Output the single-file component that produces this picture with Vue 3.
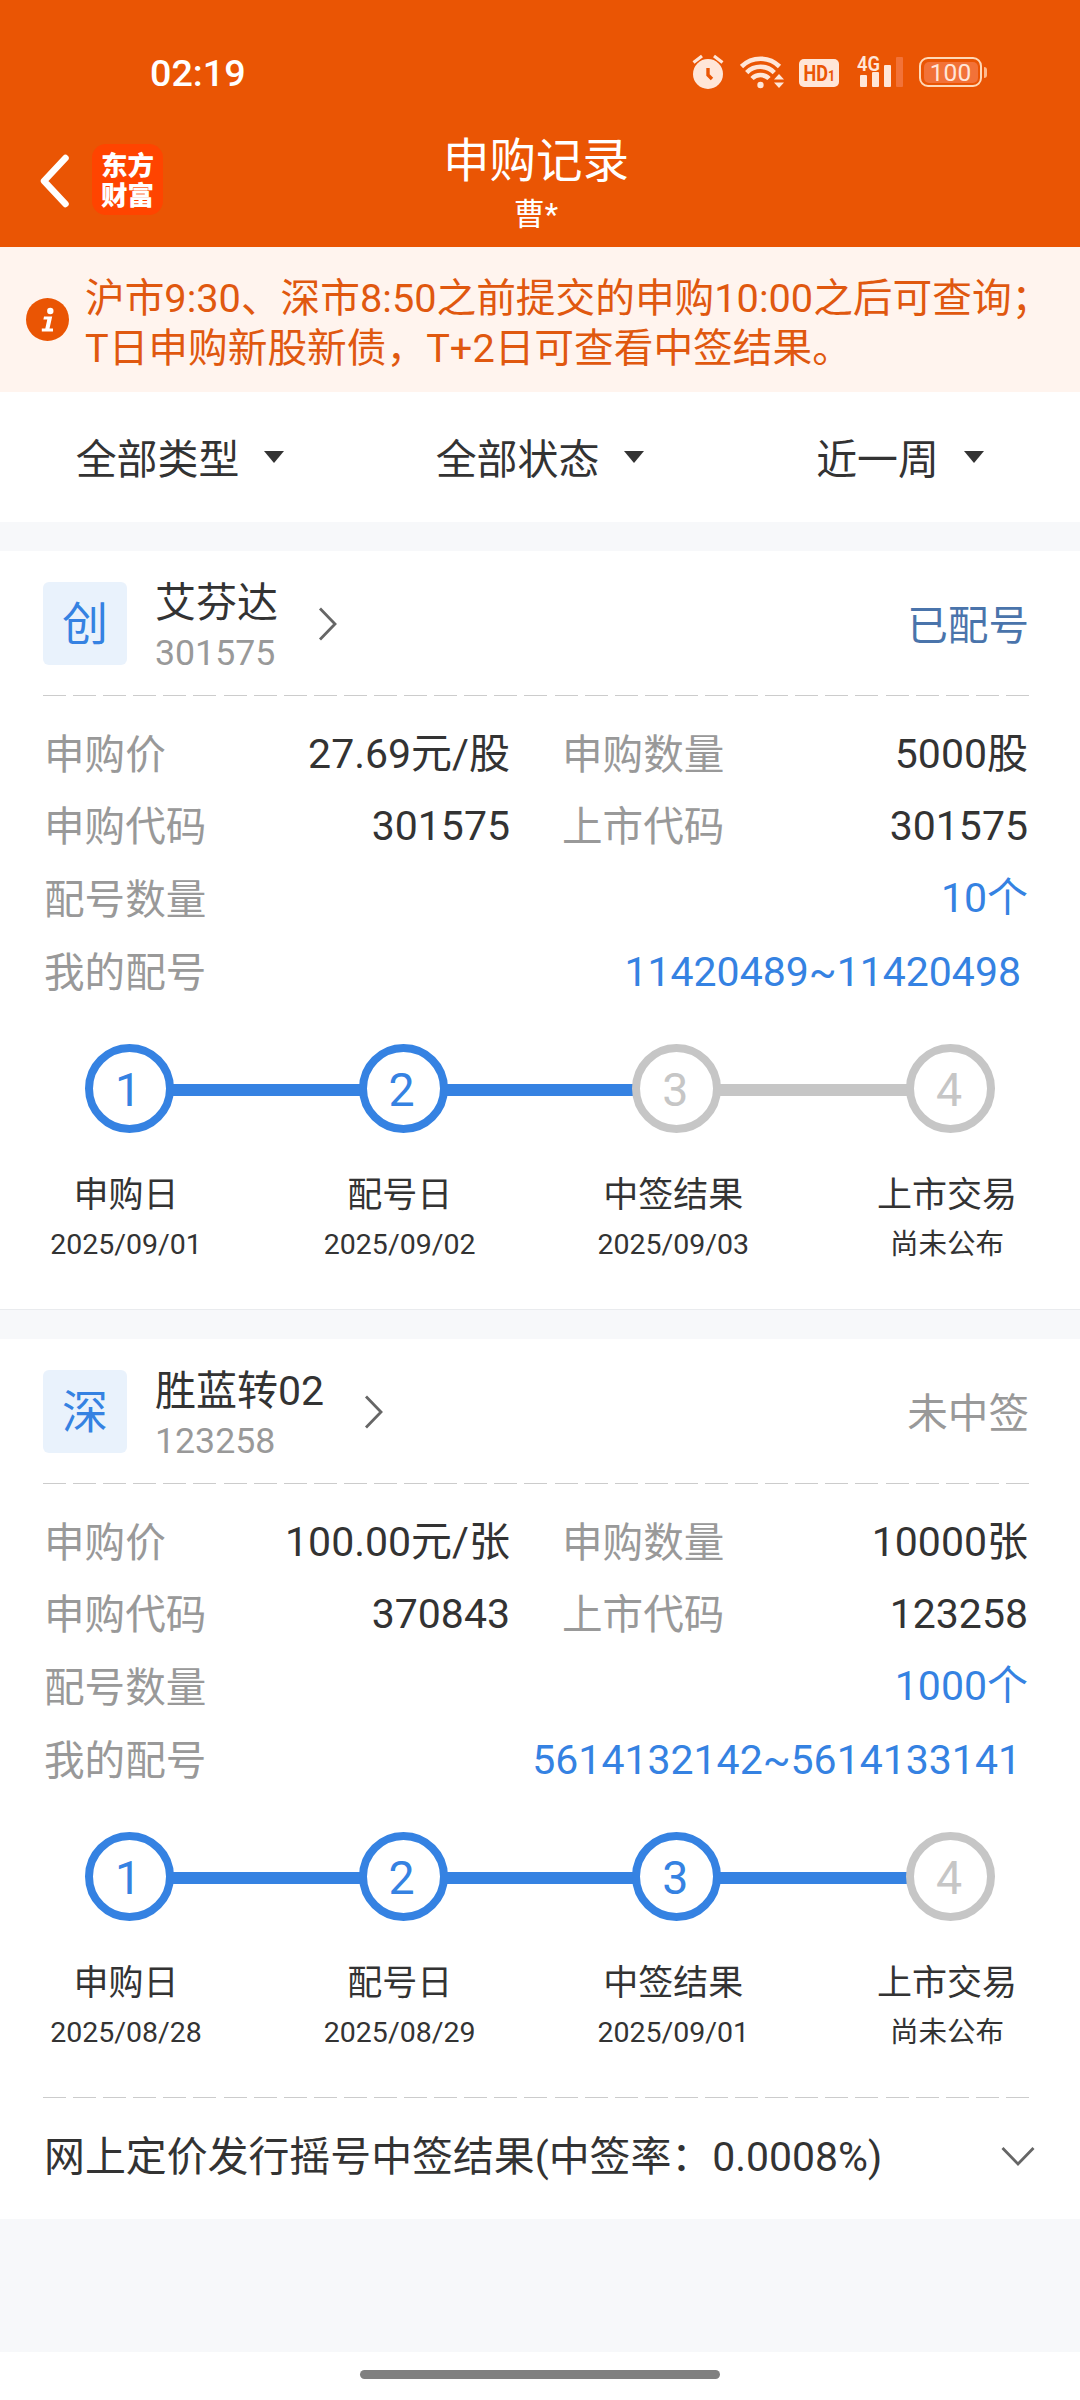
<script setup>
const filters = ['全部类型', '全部状态', '近一周']

const records = [
  {
    badge: '创', name: '艾芬达', code: '301575', status: '已配号', tone: 'allotted',
    price: '27.69元/股', amount: '5000股', applyCode: '301575', listCode: '301575',
    count: '10个', numbers: '11420489~11420498',
    steps: [
      { label: '申购日', date: '2025/09/01', done: true },
      { label: '配号日', date: '2025/09/02', done: true },
      { label: '中签结果', date: '2025/09/03', done: false },
      { label: '上市交易', date: '尚未公布', done: false }
    ],
    lines: [true, true, false]
  },
  {
    badge: '深', name: '胜蓝转02', code: '123258', status: '未中签', tone: 'missed',
    price: '100.00元/张', amount: '10000张', applyCode: '370843', listCode: '123258',
    count: '1000个', numbers: '5614132142~5614133141',
    steps: [
      { label: '申购日', date: '2025/08/28', done: true },
      { label: '配号日', date: '2025/08/29', done: true },
      { label: '中签结果', date: '2025/09/01', done: true },
      { label: '上市交易', date: '尚未公布', done: false }
    ],
    lines: [true, true, true],
    result: '网上定价发行摇号中签结果(中签率：0.0008%)'
  }
]
</script>

<template>
  <div class="page">
    <header class="header">
      <div class="statusbar">
        <span class="time">02:19</span>
        <div class="sys">
          <svg class="alarm" width="32" height="36" viewBox="0 0 32 36">
            <circle cx="16" cy="20" r="15" fill="#ffe6d8" />
            <path d="M1.5 8.5 10 2M30.5 8.5 22 2" stroke="#ffe6d8" stroke-width="3.2" fill="none" />
            <path d="M16 14v7l4 4" stroke="#ea5504" stroke-width="3.4" fill="none" />
          </svg>
          <svg class="wifi" width="46" height="36" viewBox="0 0 46 36">
            <g fill="none" stroke="#ffe6d8" stroke-width="4.6">
              <path d="M1.5 12.500a27 27 0 0 1 38 0" />
              <path d="M6.700 18.500a19.500 19.500 0 0 1 27.600 0" />
              <path d="M12 24.500a12 12 0 0 1 17 0" />
            </g>
            <circle cx="20.500" cy="31" r="3.200" fill="#ffe6d8" />
            <path d="M34 25.500h10l-5-5.500zM34 28.500h10l-5 5.500z" fill="#ffe6d8" />
          </svg>
          <svg class="hd" width="40" height="28" viewBox="0 0 40 28">
            <rect width="40" height="28" rx="5" fill="#ffe6d8" />
            <text x="4.500" y="22" font-size="22" font-weight="700" fill="#ea5504" textLength="31.500" lengthAdjust="spacingAndGlyphs">HD<tspan font-size="15">1</tspan></text>
          </svg>
          <svg class="signal" width="48" height="42" viewBox="0 -8 48 42">
            <text x="0" y="16" font-size="20.500" font-weight="600" fill="#ffe6d8" textLength="23" lengthAdjust="spacingAndGlyphs">4G</text>
            <g fill="#ffe6d8">
              <rect x="3" y="20" width="7" height="12" rx="1" />
              <rect x="15" y="17" width="7" height="15" rx="1" />
              <rect x="27" y="10" width="7" height="22" rx="1" />
            </g>
            <rect x="39" y="2" width="7" height="30" rx="1" fill="#f27238" />
          </svg>
          <div class="battery"><span>100</span></div>
          <i class="nub"></i>
        </div>
      </div>
      <div class="navbar">
        <div class="side">
          <svg width="32" height="56" viewBox="0 0 32 56">
            <path d="M26.500 5 5 28l21.500 23" fill="none" stroke="#fff" stroke-width="6.500" stroke-linecap="round" stroke-linejoin="round" />
          </svg>
          <div class="logo"><span>东方</span><span>财富</span></div>
        </div>
        <div class="titles">
          <h1>申购记录</h1>
          <p>曹*</p>
        </div>
        <div class="side"></div>
      </div>
    </header>

    <section class="notice">
      <svg width="43" height="43" viewBox="0 0 43 43">
        <circle cx="21.500" cy="21.500" r="21.500" fill="#ea5504" />
        <circle cx="24.300" cy="13" r="3.200" fill="#fff" />
        <path d="M18 18.500h8.200l-2.700 12h3.500v2.900H15.800v-2.900h3.500l2-9H17.400z" fill="#fff" />
      </svg>
      <div class="notice-text">
        <p>沪市9:30、深市8:50之前提交的申购10:00之后可查询；</p>
        <p>T日申购新股新债，T+2日可查看中签结果。</p>
      </div>
    </section>

    <nav class="filters">
      <div v-for="f in filters" :key="f" class="filter">
        <span>{{ f }}</span>
        <i class="caret"></i>
      </div>
    </nav>

    <main>
      <article v-for="r in records" :key="r.code" class="card">
        <div class="head">
          <div class="badge">{{ r.badge }}</div>
          <div class="who">
            <div class="name">{{ r.name }}</div>
            <div class="code">{{ r.code }}</div>
          </div>
          <svg class="go" width="20" height="36" viewBox="0 0 20 36">
            <path d="M2 2.500 17 18 2 33.500" fill="none" stroke="#666" stroke-width="2.800" />
          </svg>
          <div class="status" :class="r.tone">{{ r.status }}</div>
        </div>
        <div class="dash"></div>
        <div class="info">
          <div class="row">
            <div class="cell first"><span>申购价</span><b>{{ r.price }}</b></div>
            <div class="cell"><span>申购数量</span><b>{{ r.amount }}</b></div>
          </div>
          <div class="row">
            <div class="cell first"><span>申购代码</span><b>{{ r.applyCode }}</b></div>
            <div class="cell"><span>上市代码</span><b>{{ r.listCode }}</b></div>
          </div>
          <div class="row tall">
            <div class="cell"><span>配号数量</span><b class="blue">{{ r.count }}</b></div>
          </div>
          <div class="row">
            <div class="cell inset"><span>我的配号</span><b class="blue">{{ r.numbers }}</b></div>
          </div>
        </div>
        <div class="track">
          <template v-for="(s, i) in r.steps" :key="i">
            <div class="dot" :class="{ done: s.done }">{{ i + 1 }}</div>
            <div v-if="i < 3" class="line" :class="{ done: r.lines[i] }"></div>
          </template>
        </div>
        <div class="captions">
          <div v-for="s in r.steps" :key="s.label" class="caption">
            <div class="label">{{ s.label }}</div>
            <div class="date">{{ s.date }}</div>
          </div>
        </div>
        <template v-if="r.result">
          <div class="dash"></div>
          <div class="result">
            <span>{{ r.result }}</span>
            <svg width="36" height="22" viewBox="0 0 36 22">
              <path d="M2.500 2 18 18 33.500 2" fill="none" stroke="#666" stroke-width="2.800" />
            </svg>
          </div>
        </template>
      </article>
    </main>

    <footer class="gesture"><i></i></footer>
  </div>
</template>

<style>
body { margin: 0; }
</style>

<style scoped>
.page {
  width: 1080px;
  height: 2400px;
  display: flex;
  flex-direction: column;
  overflow: hidden;
  background: #f7f8fa;
  color: #333;
  font-family: Roboto, "Noto Sans CJK SC", sans-serif;
  white-space: nowrap;
}
h1, p { margin: 0; font-weight: 400; }
b { font-weight: 400; }
i { display: block; }
svg { display: block; flex: none; }

.header { height: 247px; flex: none; background: #ea5504; color: #fff; }
.statusbar {
  height: 130px;
  box-sizing: border-box;
  padding: 50px 93px 36px 150px;
  display: flex;
  justify-content: space-between;
}
.time { font-size: 37.700px; font-weight: 500; line-height: 47px; }
.sys { display: flex; align-items: flex-start; color: #ffe6d8; }
.alarm { margin-top: 4px; }
.wifi { margin: 4px 0 0 16px; }
.hd { margin: 9px 0 0 13px; }
.signal { margin: -3px 0 0 18px; }
.battery {
  width: 63px;
  height: 30px;
  margin: 7px 0 0 14px;
  box-sizing: border-box;
  border: 2.500px solid #ffd9b8;
  border-radius: 9px;
  padding: 2.500px;
}
.battery span {
  display: block;
  height: 21px;
  border-radius: 5px;
  background: #f27238;
  font-size: 24.500px;
  line-height: 21px;
  text-align: center;
}
.nub { width: 3px; height: 11px; margin: 17px 0 0 2px; border-radius: 0 3px 3px 0; background: #ffb98c; }

.navbar { display: flex; justify-content: space-between; }
.side { width: 200px; display: flex; padding-left: 39px; box-sizing: border-box; }
.side svg { margin-top: 23px; }
.logo {
  width: 71px;
  height: 71px;
  margin: 14px 0 0 21px;
  border-radius: 14px;
  background: #ff4400;
  display: flex;
  flex-direction: column;
  align-items: center;
  justify-content: center;
  flex: none;
}
.logo span { font-size: 26.500px; line-height: 30px; font-weight: 900; }
.logo span:first-child { padding-top: 3px; }
.titles { text-align: center; padding: 1px 8px 0 0; }
.titles h1 { font-size: 46.500px; line-height: 61px; }
.titles p { font-size: 31px; line-height: 46px; }

.notice {
  height: 145px;
  flex: none;
  display: flex;
  align-items: center;
  padding-left: 26px;
  background: #fff4ee;
  color: #e0580f;
}
.notice-text { margin-left: 16px; padding-top: 8px; font-size: 39.700px; line-height: 50px; }

.filters { height: 130px; flex: none; display: flex; background: #fff; }
.filter { flex: 1; display: flex; align-items: center; justify-content: center; gap: 25px; font-size: 40.900px; }
.filter span { line-height: 60px; padding-top: 5px; }
.caret { border: 10px solid transparent; border-top: 12px solid #333; border-bottom: 0; }

main { flex: 1; }
.card { margin-top: 29px; background: #fff; display: flex; flex-direction: column; }
.card:first-child { border-bottom: 1px solid #e9ebee; }
.head { height: 144px; box-sizing: border-box; display: flex; padding: 31px 51px 0 43px; }
.badge {
  width: 84px;
  height: 83px;
  border-radius: 6px;
  background: #e9f2fc;
  color: #3582e2;
  font-size: 46px;
  line-height: 84px;
  text-align: center;
}
.who { margin-left: 28px; }
.name { font-size: 41px; line-height: 42px; }
.code { font-size: 35.700px; line-height: 42px; margin-top: 8px; color: #999; }
.go { margin: 24px 0 0 40px; }
.status { margin-left: auto; font-size: 40.600px; line-height: 88px; }
.allotted { color: #4a74ab; }
.missed { color: #999; }
.dash {
  height: 1px;
  margin: 0 51px 0 43px;
  background: repeating-linear-gradient(90deg, #ccc 0 23px, transparent 23px 30.090px);
}
.info { padding: 22px 52px 0 44px; font-size: 41px; }
.row { height: 72px; display: flex; justify-content: space-between; }
.row.tall { height: 74px; }
.cell { flex: 1; display: flex; justify-content: space-between; line-height: 72px; }
.cell.first { flex: none; width: 466px; margin-right: 52px; }
.cell.inset { padding-right: 7px; }
.cell span { color: #999; font-size: 40.600px; line-height: 74px; }
.tall .cell span { line-height: 77px; }
.blue { color: #3582e2; }
.track { display: flex; align-items: center; padding: 36px 85px 0; }
.dot {
  width: 89px;
  height: 89px;
  box-sizing: border-box;
  border: 8.500px solid #c6c6c6;
  border-radius: 50%;
  color: #c6c6c6;
  font-size: 46.500px;
  font-weight: 400;
  line-height: 77px;
  text-align: center;
  padding-right: 3px;
  flex: none;
}
.dot.done { border-color: #3582e2; color: #3582e2; }
.line { flex: 1; height: 12px; margin: 3px -2px 0; background: #c6c6c6; }
.line.done { background: #3582e2; }
.captions { display: flex; justify-content: space-between; padding: 38px 50px 0 43px; height: 176px; box-sizing: border-box; }
.caption { width: 166px; text-align: center; }
.label { font-size: 35px; line-height: 50px; }
.date { font-size: 28.500px; line-height: 47px; }
.result { height: 121px; padding: 0 44px; display: flex; align-items: center; justify-content: space-between; font-size: 40.900px; }
.result span { line-height: 60px; padding-bottom: 3px; }
.result svg { margin-bottom: 3px; }

.gesture { height: 48px; flex: none; background: #fff; display: flex; justify-content: center; }
.gesture i { width: 360px; height: 9px; margin-top: 18px; border-radius: 5px; background: #808080; }
</style>
